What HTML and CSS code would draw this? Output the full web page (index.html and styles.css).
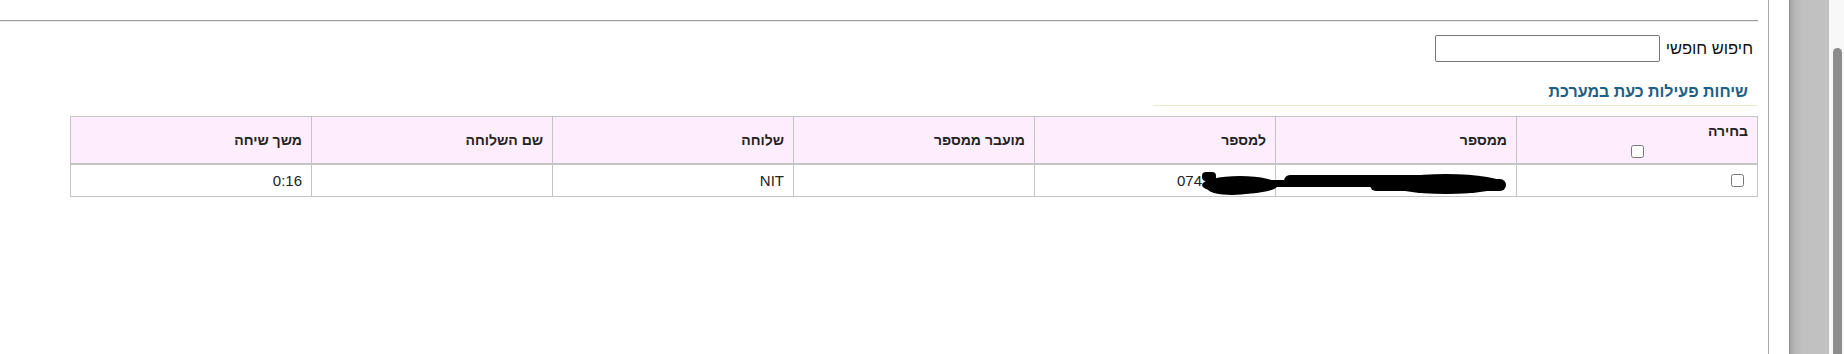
FILE: index.html
```html
<!DOCTYPE html>
<html lang="he">
<head>
<meta charset="utf-8">
<title>שיחות פעילות</title>
<link rel="stylesheet" href="styles.css">
</head>
<body>
<div class="app">
  <main class="main" dir="rtl">
    <hr class="top-rule">
    <div class="search">
      <label class="search-label" for="q">חיפוש חופשי</label>
      <input class="search-input" id="q" type="text">
    </div>
    <div class="title-row">
      <h2 class="title">שיחות פעילות כעת במערכת</h2>
    </div>
    <div class="table-wrap">
      <table class="calls">
        <thead>
          <tr>
            <th class="col-select"><div>בחירה</div><input type="checkbox" class="cb"></th>
            <th>ממספר</th>
            <th>למספר</th>
            <th>מועבר ממספר</th>
            <th>שלוחה</th>
            <th>שם השלוחה</th>
            <th>משך שיחה</th>
          </tr>
        </thead>
        <tbody>
          <tr>
            <td><input type="checkbox" class="cb"></td>
            <td></td>
            <td><span class="num" dir="ltr">074<span class="mask-gap"></span></span></td>
            <td></td>
            <td>NIT</td>
            <td></td>
            <td>0:16</td>
          </tr>
        </tbody>
      </table>
      <svg class="redact" width="310" height="30" viewBox="0 0 310 30" aria-hidden="true">
        <rect x="2" y="2" width="14" height="9" rx="4" fill="#000"/>
        <ellipse cx="40" cy="15" rx="38" ry="9" fill="#000"/>
        <ellipse cx="32" cy="19" rx="24" ry="6" fill="#000"/>
        <rect x="60" y="10" width="32" height="7" rx="3" fill="#000"/>
        <rect x="84" y="5" width="165" height="12" rx="6" fill="#000"/>
        <ellipse cx="246" cy="14" rx="58" ry="10" fill="#000"/>
        <rect x="170" y="9" width="136" height="12" rx="6" fill="#000"/>
      </svg>
    </div>
  </main>
  <div class="gutter"></div>
  <div class="side-panel"></div>
  <div class="scrollbar"><div class="thumb"></div></div>
</div>
</body>
</html>
```
FILE: styles.css
```css
html, body {
  margin: 0;
  padding: 0;
  background: #fff;
}
body {
  font-family: "Liberation Sans", Arial, sans-serif;
  color: #222;
  overflow: hidden;
}
.app {
  display: flex;
  height: 354px;
}
.main {
  width: 1758px;
  padding-right: 10px;
  border-right: 1px solid #a8a8a8;
  flex: none;
}
.top-rule {
  margin: 20px 0 0 0;
  border: 0;
  border-top: 1px solid #9a9a9a;
  border-bottom: 1px solid #ececec;
  height: 0;
}
.search {
  display: flex;
  align-items: center;
  gap: 6px;
  margin-top: 13px;
  padding-right: 5px;
}
.search-label {
  font-size: 16.5px;
  color: #111;
}
.search-input {
  box-sizing: border-box;
  width: 225px;
  height: 27px;
  margin: 0;
  border: 1px solid #767676;
  border-radius: 2px;
  background: #fff;
}
.title-row {
  display: flex;
  margin-top: 20px;
}
.title {
  width: 595px;
  margin: 0;
  padding: 0 10px 3px 0;
  font-size: 16px;
  font-weight: bold;
  color: #1d5e88;
  border-bottom: 1px solid #ececc8;
  line-height: 20px;
}
.table-wrap {
  position: relative;
  margin-top: 10px;
  margin-left: 70px;
}
.calls {
  width: 1688px;
  table-layout: fixed;
  border-collapse: collapse;
  font-size: 14px;
}
.calls th,
.calls td {
  border: 1px solid #c4c4c4;
  text-align: right;
  padding: 0 9px;
}
.calls th {
  height: 46px;
  background: #fdedfd;
  font-weight: bold;
  color: #222;
  border-bottom: 2px solid #c4c4c4;
}
.calls th.col-select {
  vertical-align: top;
  padding-top: 6px;
  height: 40px;
}
.calls th.col-select .cb {
  display: block;
  margin: 6px auto 0;
}
.calls td {
  height: 31px;
  font-size: 15px;
  color: #222;
}
.cb {
  width: 13px;
  height: 13px;
  margin: 3px 4px 3px 3px;
  vertical-align: middle;
}
.num {
  display: inline-block;
}
.mask-gap {
  display: inline-block;
  width: 64px;
}
.redact {
  position: absolute;
  left: 1130px;
  top: 54px;
}
.gutter {
  width: 20px;
  flex: none;
}
.side-panel {
  width: 40px;
  flex: none;
  background: linear-gradient(to right, #8e8e8e 0, #a8a8a8 2px, #b8b8b8 6px, #c0c0c0 14px, #c2c2c2 100%);
}
.scrollbar {
  width: 15px;
  flex: none;
  background: #f8f8f8;
  padding-top: 48px;
  box-sizing: border-box;
  display: flex;
  justify-content: center;
}
.thumb {
  width: 9px;
  margin-left: 1px;
  background: #8c8c8c;
  border-radius: 5px 5px 0 0;
}
```
